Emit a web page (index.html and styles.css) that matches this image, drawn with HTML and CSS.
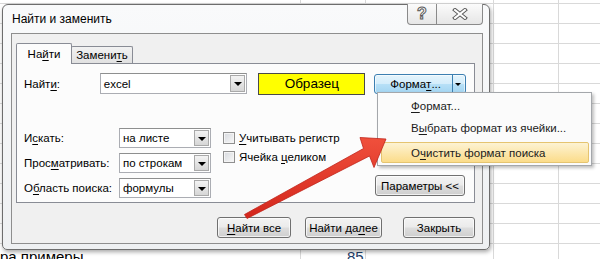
FILE: index.html
```html
<!DOCTYPE html>
<html>

<head>
  <title>Найти и заменить</title>
  <link rel="stylesheet" href="styles.css">
</head>

<body>
  <div class="sheet">
    <div class="sheet-row">
      <span class="cell cell-a">ра примеры</span>
      <span class="cell cell-b">85</span>
    </div>

    <div class="dialog">
      <div class="titlebar">
        <span class="title">Найти и заменить</span>
        <div class="caption-buttons">
          <span class="caption-btn help-btn">?</span>
          <span class="caption-btn close-btn">
            <svg width="16" height="12" viewBox="0 0 16 12">
              <path d="M3 2 L13 10 M13 2 L3 10" stroke="#5a5a5a" stroke-width="4" stroke-linecap="square" />
              <path d="M3 2 L13 10 M13 2 L3 10" stroke="#ffffff" stroke-width="2" stroke-linecap="square" />
            </svg>
          </span>
        </div>
      </div>

      <div class="client">
        <div class="tabs">
          <div class="tab tab-active">На<u>й</u>ти</div>
          <div class="tab tab-other">Замени<u>т</u>ь</div>
        </div>

        <div class="panel">
          <div class="find-row">
            <span class="label find-label">Найт<u>и</u>:</span>
            <div class="combo find-combo">
              <span class="combo-text">excel</span>
              <span class="combo-arrow"></span>
            </div>
            <div class="sample">Образец</div>
            <div class="split-btn">
              <span class="split-main">Форма<u>т</u>...</span>
              <span class="split-arrow"></span>
            </div>
          </div>

          <div class="options">
            <div class="option-fields">
              <div class="field-row">
                <span class="label field-label">И<u>с</u>кать:</span>
                <div class="combo select">
                  <span class="combo-text">на листе</span>
                  <span class="combo-arrow"></span>
                </div>
              </div>
              <div class="field-row">
                <span class="label field-label">Прос<u>м</u>атривать:</span>
                <div class="combo select">
                  <span class="combo-text">по строкам</span>
                  <span class="combo-arrow"></span>
                </div>
              </div>
              <div class="field-row">
                <span class="label field-label">О<u>б</u>ласть поиска:</span>
                <div class="combo select">
                  <span class="combo-text">формулы</span>
                  <span class="combo-arrow"></span>
                </div>
              </div>
            </div>

            <div class="checks">
              <div class="check-row"><span class="checkbox"></span><span><u>У</u>читывать регистр</span></div>
              <div class="check-row"><span class="checkbox"></span><span>Ячейка <u>ц</u>еликом</span></div>
            </div>

            <button class="btn params-btn">Параметры &lt;&lt;</button>
          </div>
        </div>

        <div class="actions">
          <button class="btn btn-find-all"><u>Н</u>айти все</button>
          <button class="btn btn-find-next">Найти да<u>л</u>ее</button>
          <button class="btn btn-close">Закрыть</button>
        </div>
      </div>
    </div>

    <div class="menu">
      <div class="menu-item"><u>Ф</u>ормат...</div>
      <div class="menu-item">В<u>ы</u>брать формат из ячейки...</div>
      <div class="menu-item menu-item-hot">О<u>ч</u>истить формат поиска</div>
    </div>

    <svg class="arrow" width="600" height="259" viewBox="0 0 600 259">
      <defs>
        <linearGradient id="arrow-fill" x1="0" y1="0" x2="0" y2="1">
          <stop offset="0" stop-color="#f0503c" />
          <stop offset="1" stop-color="#d3261c" />
        </linearGradient>
      </defs>
      <polygon points="244.5,214.5 363.5,148.5 360,137.5 386,139 374,167.5 369.5,156 247,218.5"
        fill="url(#arrow-fill)" stroke="#c0241a" stroke-width="0.8" stroke-linejoin="round" />
    </svg>
  </div>
</body>

</html>
```

FILE: styles.css
```css
* {
  box-sizing: border-box;
}

body {
  margin: 0;
  font-family: "Liberation Sans", Arial, sans-serif;
  font-size: 11.5px;
  color: #000;
}

u {
  text-decoration-thickness: 1px;
  text-underline-offset: 2px;
}

/* spreadsheet behind the dialog */
.sheet {
  position: relative;
  width: 600px;
  height: 259px;
  overflow: hidden;
  background-color: #fff;
  background-image:
    linear-gradient(#d9d9d9, #d9d9d9),
    linear-gradient(#d9d9d9, #d9d9d9),
    linear-gradient(#d9d9d9, #d9d9d9),
    linear-gradient(#d9d9d9, #d9d9d9),
    repeating-linear-gradient(to bottom, #d9d9d9 0, #d9d9d9 1px, transparent 1px, transparent 20px);
  background-size: 1px 100%, 1px 100%, 1px 100%, 1px 100%, 100% 100%;
  background-position: 300px 0, 365px 0, 493px 0, 558px 0, 0 3px;
  background-repeat: no-repeat, no-repeat, no-repeat, no-repeat, repeat;
}

.sheet-row {
  display: flex;
  margin-top: 247px;
  height: 20px;
  font-size: 15px;
  line-height: 20px;
}

.cell-a {
  width: 340px;
}

.cell-b {
  color: #1f3e6a;
  margin-left: 7px;
}

/* dialog window */
.dialog {
  position: absolute;
  left: 2px;
  top: 4px;
  width: 488px;
  height: 246px;
  display: flex;
  flex-direction: column;
  padding: 0 6px 5px 8px;
  background: linear-gradient(#f9fafb, #eef0f2);
  border: 1px solid #6d6d6d;
  border-radius: 6px 6px 5px 5px;
  box-shadow: 1px 2px 4px rgba(0, 0, 0, 0.35);
}

.titlebar {
  display: flex;
  align-items: center;
  height: 28px;
}

.title {
  padding-left: 1px;
  font-size: 12px;
}

.caption-buttons {
  display: flex;
  align-self: flex-start;
  margin-left: auto;
  margin-top: -1px;
}

.caption-btn {
  display: flex;
  align-items: center;
  justify-content: center;
  height: 21px;
  background: linear-gradient(#fbfbfb, #e6e6e6);
  border: 1px solid #8a8a8a;
  border-top: none;
}

.help-btn {
  width: 30px;
  border-radius: 0 0 0 4px;
  font-size: 16px;
  font-weight: bold;
  color: #fff;
  -webkit-text-stroke: 1px #5a5a5a;
}

.close-btn {
  width: 46px;
  border-left: none;
  border-radius: 0 0 4px 0;
}

.client {
  flex: 1;
  padding: 9px 6px 0 4px;
  background: #f0f0f0;
  border: 1px solid #8e8e8e;
}

/* tabs */
.tabs {
  display: flex;
  align-items: flex-end;
  height: 21px;
  margin-bottom: -1px;
  position: relative;
  z-index: 1;
}

.tab {
  display: flex;
  align-items: center;
  justify-content: center;
  border: 1px solid #898c95;
  border-bottom: none;
}

.tab-active {
  width: 56px;
  height: 21px;
  background: #fcfcfc;
  border-radius: 2px 2px 0 0;
}

.tab-other {
  width: 62px;
  height: 17px;
  margin-bottom: 1px;
  margin-left: -1px;
  background: linear-gradient(#f2f2f2, #e1e1e1);
  border-radius: 2px 2px 0 0;
}

.panel {
  width: 459px;
  height: 140px;
  padding: 9px 8px 0 7px;
  background: #fcfcfc;
  border: 1px solid #898c95;
}

.find-row {
  display: flex;
  align-items: center;
  height: 21px;
}

.find-label {
  width: 76px;
}

.combo {
  display: flex;
  align-items: stretch;
  background: #fff;
  border: 1px solid #abadb3;
  border-top-color: #8e8f8f;
}

.combo-text {
  flex: 1;
  padding-left: 3px;
  display: flex;
  align-items: center;
}

.combo-arrow {
  position: relative;
  width: 15px;
  margin: 1px;
  background: linear-gradient(#f3f3f3, #d6d6d6);
  border: 1px solid #a9a9a9;
}

.combo-arrow::after {
  content: "";
  position: absolute;
  left: 3px;
  top: 6px;
  border-left: 4px solid transparent;
  border-right: 4px solid transparent;
  border-top: 4px solid #000;
}

.find-combo {
  width: 148px;
  height: 21px;
}

.sample {
  display: flex;
  align-items: center;
  justify-content: center;
  width: 107px;
  height: 22px;
  margin-left: 11px;
  font-size: 13.5px;
  background: #ffff00;
  border: 1px solid #4a4a4a;
}

.split-btn {
  display: flex;
  width: 92px;
  height: 20px;
  margin-left: 9px;
  background: linear-gradient(#e5f4fc 0%, #d4edfb 48%, #b7e0f7 52%, #a2d4f1 100%);
  border: 1px solid #3c7fb1;
  border-radius: 3px;
  box-shadow: inset 0 0 0 1px rgba(255, 255, 255, 0.6);
}

.split-main {
  flex: 1;
  display: flex;
  align-items: center;
  justify-content: center;
  padding-left: 4px;
}

.split-arrow {
  position: relative;
  width: 13px;
  border-left: 1px solid #3c7fb1;
}

.split-arrow::after {
  content: "";
  position: absolute;
  left: 2px;
  top: 8px;
  border-left: 3px solid transparent;
  border-right: 3px solid transparent;
  border-top: 3px solid #000;
}

/* search options */
.options {
  display: flex;
  align-items: flex-start;
  margin-top: 34px;
}

.option-fields {
  display: flex;
  flex-direction: column;
  gap: 5px;
}

.field-row {
  display: flex;
  align-items: center;
  height: 20px;
}

.field-label {
  width: 95px;
}

.select {
  width: 92px;
  height: 20px;
}

.checks {
  display: flex;
  flex-direction: column;
  margin-left: 12px;
}

.check-row {
  display: flex;
  align-items: center;
  height: 19px;
  gap: 4px;
}

.checkbox {
  width: 12px;
  height: 12px;
  background: linear-gradient(135deg, #d6d9de, #f8f8f8);
  border: 1px solid #8f8f8f;
  box-shadow: inset 0 0 0 1px #f4f4f4;
}

.btn {
  height: 21px;
  padding: 0;
  font-family: inherit;
  font-size: 11.5px;
  color: #000;
  background: linear-gradient(#f3f3f3 0%, #ebebeb 48%, #dddddd 52%, #cfcfcf 100%);
  border: 1px solid #707070;
  border-radius: 3px;
  box-shadow: inset 0 0 0 1px rgba(255, 255, 255, 0.7);
}

.params-btn {
  align-self: flex-end;
  width: 90px;
  margin-left: auto;
  margin-right: 1px;
  margin-bottom: 2px;
}

.actions {
  display: flex;
  justify-content: flex-end;
  width: 459px;
  margin-top: 14px;
}

.btn-find-all {
  width: 74px;
  margin-right: 14px;
}

.btn-find-next {
  width: 77px;
  margin-right: 21px;
}

.btn-close {
  width: 72px;
}

/* dropdown menu of the Format button */
.menu {
  position: absolute;
  left: 377px;
  top: 92px;
  width: 215px;
  padding: 2px;
  background: #fbfbfb;
  border: 1px solid #a4a7ab;
  box-shadow: 2px 2px 3px rgba(0, 0, 0, 0.25);
}

.menu-item {
  display: flex;
  align-items: center;
  height: 22px;
  padding-left: 31px;
  color: #1b1b1b;
}

.menu-item-hot {
  height: 21px;
  margin: 3px 0 0 1px;
  padding-left: 29px;
  background: linear-gradient(#fdf3d3, #fbdc8a);
  border: 1px solid #e5c470;
  border-radius: 2px;
}

.arrow {
  position: absolute;
  left: 0;
  top: 0;
  pointer-events: none;
}
```
